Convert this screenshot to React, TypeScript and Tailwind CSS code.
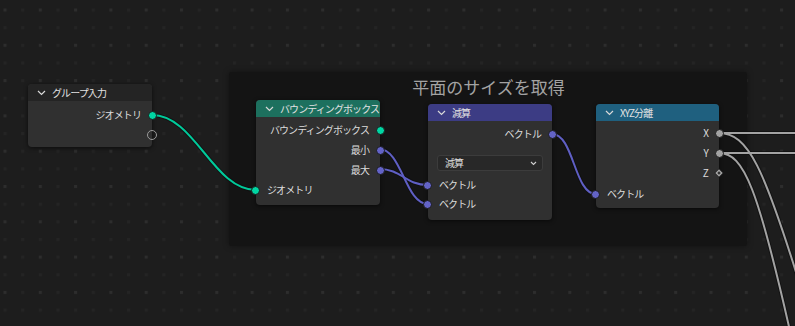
import React from "react";

const FONT = { fontFamily: '"Noto Sans CJK JP", "Noto Sans", sans-serif' };

function Chevron() {
  return (
    <svg width="9" height="6" viewBox="0 0 9 6" className="shrink-0">
      <path d="M1 1 L4.5 4.5 L8 1" fill="none" stroke="#d8d8d8" strokeWidth="1.2" />
    </svg>
  );
}

type SockKind = "geo" | "vec" | "float" | "empty" | "diamond";

function SocketDot({ kind }: { kind: SockKind }) {
  if (kind === "empty")
    return <div className="w-[10px] h-[10px] rounded-full border border-[#9a9a9a]" />;
  if (kind === "diamond")
    return (
      <svg width="10" height="10" viewBox="0 0 10 10">
        <path d="M5 0.8 L9.2 5 L5 9.2 L0.8 5 Z" fill="#a1a1a1" stroke="#1a1a1a" strokeWidth="0.8" />
        <rect x="3.8" y="3.8" width="2.4" height="2.4" transform="rotate(45 5 5)" fill="#303030" />
      </svg>
    );
  const bg = kind === "geo" ? "bg-[#00d6a3]" : kind === "vec" ? "bg-[#6363c7]" : "bg-[#a1a1a1]";
  return <div className={"w-[9px] h-[9px] rounded-full border border-[#1a1a1a] " + bg} />;
}

function Row({
  label,
  side,
  kind,
  h = "h-[20px]",
}: {
  label?: string;
  side: "in" | "out";
  kind?: SockKind;
  h?: string;
}) {
  return (
    <div
      className={
        "relative flex items-center pb-[2px] " +
        h +
        (side === "out" ? " justify-end pr-[11px]" : " pl-[11px]")
      }
    >
      {label && <span>{label}</span>}
      {kind && (
        <div
          className={
            "absolute top-0 bottom-0 flex items-center " +
            (side === "out" ? "right-[-5px]" : "left-[-5px]")
          }
        >
          <SocketDot kind={kind} />
        </div>
      )}
    </div>
  );
}

function Node({
  pos,
  header,
  title,
  body,
  children,
}: {
  pos: string;
  header: string;
  title: string;
  body: string;
  children: React.ReactNode;
}) {
  return (
    <div
      className={
        "absolute rounded-[4px] bg-[#303030] shadow-[0_1px_4px_rgba(0,0,0,0.6)] text-[10px] tracking-[-0.9px] " +
        pos
      }
    >
      <div
        className={
          "h-[17px] rounded-t-[4px] flex items-center gap-[6px] pl-[9px] text-[#e2e2e2] overflow-hidden whitespace-nowrap " +
          header
        }
      >
        <Chevron />
        <span className="pb-[1px]">{title}</span>
      </div>
      <div className={"flex flex-col " + body}>{children}</div>
    </div>
  );
}

export default function App() {
  return (
    <div className="relative w-[795px] h-[326px] overflow-hidden bg-[#1d1d1d] text-[#dcdcdc]" style={FONT}>
      {/* dotted grid */}
      <svg className="absolute inset-0" width="795" height="326">
        <defs>
          <pattern id="dots" x="3.5" y="8.5" width="35.3" height="35.3" patternUnits="userSpaceOnUse">
            <rect x="0" y="0" width="3" height="3" fill="#2d2d2d" />
            <rect x="17.65" y="0" width="3" height="3" fill="#242424" />
            <rect x="0" y="17.65" width="3" height="3" fill="#242424" />
            <rect x="17.65" y="17.65" width="3" height="3" fill="#242424" />
          </pattern>
        </defs>
        <rect width="795" height="326" fill="url(#dots)" />
      </svg>

      {/* frame */}
      <div className="absolute left-[229px] top-[72px] w-[518px] h-[174px] rounded-[3px] bg-[#141414] shadow-[0_0_6px_rgba(0,0,0,0.4)]">
        <div className="text-center text-[17px] leading-none text-[#a3a3a3] pt-[6px] pl-[1px]">平面のサイズを取得</div>
      </div>

      {/* wires */}
      <svg className="absolute inset-0" width="795" height="326" fill="none">
        <g stroke="#0e0e0e" strokeWidth="4" strokeOpacity="0.7">
          <path d="M152,115 C195,115 213,190 256,190" />
          <path d="M379,149 C402,149 405,204 428,204" />
          <path d="M379,169 C402,169 405,185 428,185" />
          <path d="M552,134 C574,134 574,194 596,194" />
          <path d="M719,133 L800,133" />
          <path d="M719,153 L800,153" />
          <path d="M719,133 C748,133 764,168 800,285" />
          <path d="M719,153 C744,153 758,188 792,340" />
        </g>
        <g strokeWidth="2">
          <path d="M152,115 C195,115 213,190 256,190" stroke="#00c99a" />
          <path d="M379,149 C402,149 405,204 428,204" stroke="#5f5fc4" />
          <path d="M379,169 C402,169 405,185 428,185" stroke="#5f5fc4" />
          <path d="M552,134 C574,134 574,194 596,194" stroke="#5f5fc4" />
          <path d="M719,133 L800,133" stroke="#a3a3a3" />
          <path d="M719,153 L800,153" stroke="#a3a3a3" />
          <path d="M719,133 C748,133 764,168 800,285" stroke="#a3a3a3" />
          <path d="M719,153 C744,153 758,188 792,340" stroke="#a3a3a3" />
        </g>
      </svg>

      <Node pos="left-[28px] top-[84px] w-[124px] h-[63px]" header="bg-[#242424]" title="グループ入力" body="pt-[4px]">
        <Row label="ジオメトリ" side="out" kind="geo" />
        <Row side="out" kind="empty" h="h-[19px]" />
      </Node>

      <Node pos="left-[256px] top-[100px] w-[124px] h-[105px]" header="bg-[#1d705e]" title="バウンディングボックス" body="pt-[3px]">
        <Row label="バウンディングボックス" side="out" kind="geo" />
        <Row label="最小" side="out" kind="vec" />
        <Row label="最大" side="out" kind="vec" />
        <Row label="ジオメトリ" side="in" kind="geo" />
      </Node>

      <Node pos="left-[428px] top-[104px] w-[124px] h-[116px]" header="bg-[#3c3c84]" title="減算" body="pt-[3px]">
        <Row label="ベクトル" side="out" kind="vec" />
        <div className="mt-[11px] mx-[9px] h-[16px] rounded-[3px] bg-[#282828] border border-[#3c3c3c] flex items-center justify-between pl-[7px] pr-[5px]">
          <span className="pb-[1px]">減算</span>
          <svg width="7" height="5" viewBox="0 0 7 5">
            <path d="M1 1 L3.5 3.5 L6 1" fill="none" stroke="#d0d0d0" strokeWidth="1.1" />
          </svg>
        </div>
        <div className="h-[4px]" />
        <Row label="ベクトル" side="in" kind="vec" />
        <Row label="ベクトル" side="in" kind="vec" h="h-[19px]" />
      </Node>

      <Node pos="left-[596px] top-[104px] w-[123px] h-[104px]" header="bg-[#1f607f]" title="XYZ分離" body="pt-[2px]">
        <Row label="X" side="out" kind="float" />
        <Row label="Y" side="out" kind="float" />
        <Row label="Z" side="out" kind="diamond" />
        <div className="h-[1px]" />
        <Row label="ベクトル" side="in" kind="vec" />
      </Node>
    </div>
  );
}
